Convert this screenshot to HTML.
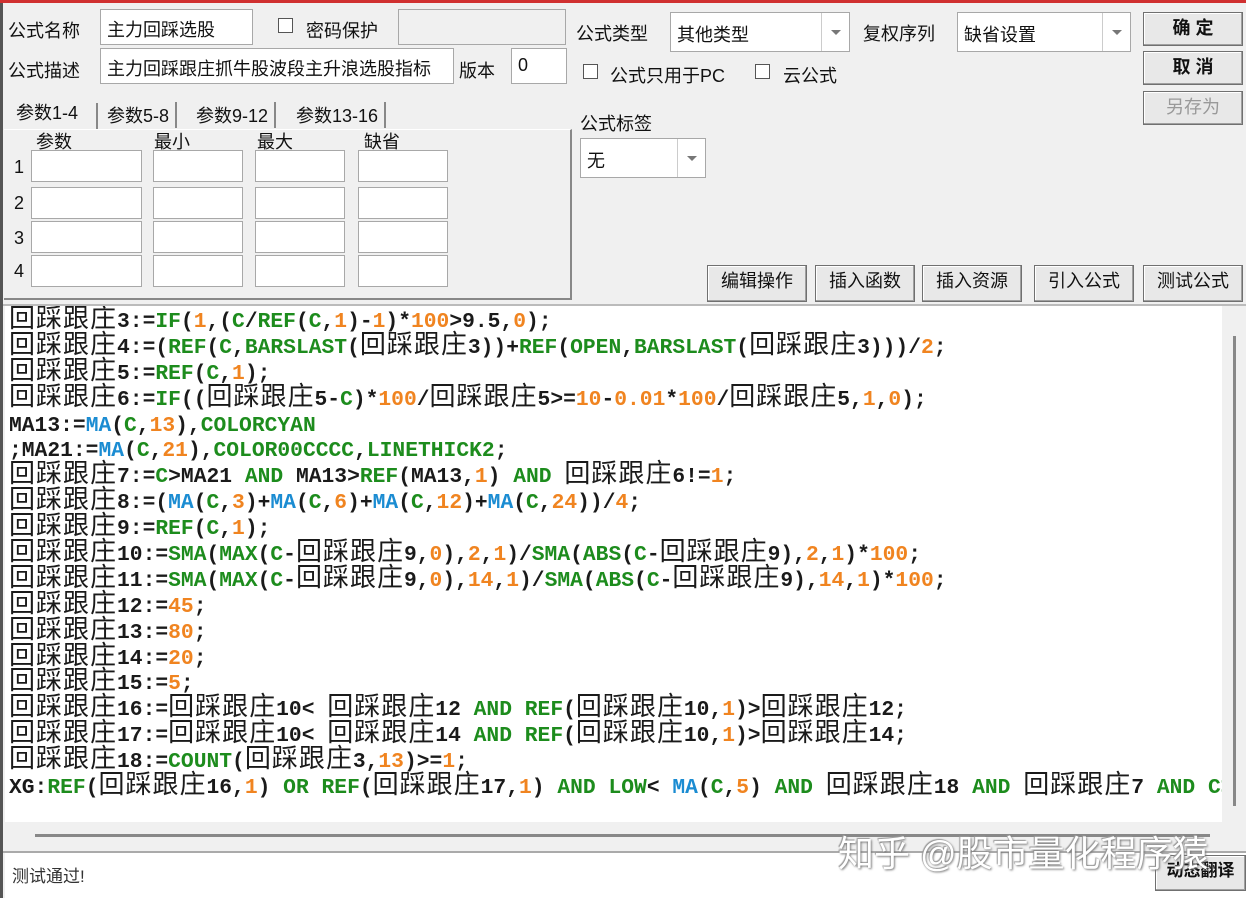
<!DOCTYPE html>
<html><head><meta charset="utf-8">
<style>
*{margin:0;padding:0;box-sizing:border-box}
body{width:1246px;height:898px;background:#f0f0f0;position:relative;overflow:hidden;font-family:"Liberation Sans","Noto Sans CJK SC",sans-serif;font-size:18px;color:#111}
.a{position:absolute}
.box{position:absolute;background:#fff;border:1px solid #a8a8a8}
.btn{position:absolute;background:#e8e8e8;border:1px solid #707070;box-shadow:inset -1px -1px 0 #a0a0a0,inset 1px 1px 0 #fff;text-align:center;font-size:18px;line-height:30px}
.cb{position:absolute;width:15px;height:15px;border:1px solid #555;background:#fff}
.dd{position:absolute;right:0;top:0;bottom:0;width:28px;border-left:1px solid #ccc}
.dd:after{content:"";position:absolute;left:9px;top:50%;margin-top:-2px;border-left:5px solid transparent;border-right:5px solid transparent;border-top:5px solid #777}
#ed{position:absolute;left:5px;top:306px;width:1217px;height:516px;background:#fff;overflow:hidden}
#code{position:absolute;left:4px;top:4px;white-space:nowrap;font-family:"Liberation Mono",monospace;font-weight:bold;font-size:21.3px;line-height:25.9px;color:#1a1a1a}
#code div{height:25.9px}
.k{font-family:"Noto Sans CJK SC",sans-serif;font-weight:normal;font-size:26px;letter-spacing:1px;line-height:0}
.g{color:#1d8c1d}.b{color:#1b8cd2}.o{color:#f08420}
</style></head><body>
<div class="a" style="left:0;top:0;width:1246px;height:3px;background:#d03030"></div>
<div class="a" style="left:0;top:3px;width:3px;height:895px;background:#555"></div>

<div class="a" style="left:8px;top:17px">公式名称</div>
<div class="box" style="left:100px;top:9px;width:153px;height:36px;padding:6px 6px">主力回踩选股</div>
<div class="cb" style="left:278px;top:18px"></div>
<div class="a" style="left:306px;top:17px">密码保护</div>
<div class="box" style="left:398px;top:9px;width:168px;height:36px;background:#f0f0f0"></div>
<div class="a" style="left:8px;top:57px">公式描述</div>
<div class="box" style="left:100px;top:48px;width:354px;height:36px;padding:6px 6px;overflow:hidden;white-space:nowrap">主力回踩跟庄抓牛股波段主升浪选股指标</div>
<div class="a" style="left:459px;top:57px">版本</div>
<div class="box" style="left:511px;top:48px;width:56px;height:36px;padding:6px 6px">0</div>

<div class="a" style="left:8px;top:103px;width:90px;height:26px;background:#f0f0f0;border-right:2px solid #888"></div>
<div class="a" style="left:16px;top:99px">参数1-4</div>
<div class="a" style="left:107px;top:102px;border-right:2px solid #888;padding-right:6px">参数5-8</div>
<div class="a" style="left:196px;top:102px;border-right:2px solid #888;padding-right:6px">参数9-12</div>
<div class="a" style="left:296px;top:102px;border-right:2px solid #888;padding-right:6px">参数13-16</div>
<div class="a" style="left:4px;top:129px;width:568px;height:171px;border-right:2px solid #888;border-bottom:2px solid #888;border-top:1px solid #fff"></div>
<div class="a" style="left:36px;top:128px">参数</div>
<div class="a" style="left:154px;top:128px">最小</div>
<div class="a" style="left:257px;top:128px">最大</div>
<div class="a" style="left:364px;top:128px">缺省</div>
<div class="a" style="left:14px;top:157px">1</div><div class="a" style="left:14px;top:193px">2</div><div class="a" style="left:14px;top:228px">3</div><div class="a" style="left:14px;top:261px">4</div>
<div class="box" style="left:31px;top:150px;width:111px;height:32px"></div><div class="box" style="left:153px;top:150px;width:90px;height:32px"></div><div class="box" style="left:255px;top:150px;width:90px;height:32px"></div><div class="box" style="left:358px;top:150px;width:90px;height:32px"></div>
<div class="box" style="left:31px;top:187px;width:111px;height:32px"></div><div class="box" style="left:153px;top:187px;width:90px;height:32px"></div><div class="box" style="left:255px;top:187px;width:90px;height:32px"></div><div class="box" style="left:358px;top:187px;width:90px;height:32px"></div>
<div class="box" style="left:31px;top:221px;width:111px;height:32px"></div><div class="box" style="left:153px;top:221px;width:90px;height:32px"></div><div class="box" style="left:255px;top:221px;width:90px;height:32px"></div><div class="box" style="left:358px;top:221px;width:90px;height:32px"></div>
<div class="box" style="left:31px;top:255px;width:111px;height:32px"></div><div class="box" style="left:153px;top:255px;width:90px;height:32px"></div><div class="box" style="left:255px;top:255px;width:90px;height:32px"></div><div class="box" style="left:358px;top:255px;width:90px;height:32px"></div>

<div class="a" style="left:576px;top:20px">公式类型</div>
<div class="box" style="left:670px;top:12px;width:180px;height:40px;padding:8px 6px">其他类型<div class="dd"></div></div>
<div class="a" style="left:863px;top:20px">复权序列</div>
<div class="box" style="left:957px;top:12px;width:174px;height:40px;padding:8px 6px">缺省设置<div class="dd"></div></div>
<div class="cb" style="left:583px;top:64px"></div><div class="a" style="left:610px;top:62px">公式只用于PC</div>
<div class="cb" style="left:755px;top:64px"></div><div class="a" style="left:783px;top:62px">云公式</div>
<div class="a" style="left:580px;top:110px">公式标签</div>
<div class="box" style="left:580px;top:138px;width:126px;height:40px;padding:8px 6px">无<div class="dd"></div></div>

<div class="btn" style="left:1143px;top:12px;width:100px;height:34px;font-weight:bold">确 定</div>
<div class="btn" style="left:1143px;top:51px;width:100px;height:34px;font-weight:bold">取 消</div>
<div class="btn" style="left:1143px;top:91px;width:100px;height:34px;color:#999">另存为</div>
<div class="btn" style="left:707px;top:265px;width:100px;height:37px">编辑操作</div>
<div class="btn" style="left:815px;top:265px;width:100px;height:37px">插入函数</div>
<div class="btn" style="left:922px;top:265px;width:100px;height:37px">插入资源</div>
<div class="btn" style="left:1034px;top:265px;width:100px;height:37px">引入公式</div>
<div class="btn" style="left:1143px;top:265px;width:100px;height:37px">测试公式</div>
<div class="a" style="left:3px;top:304px;width:1243px;height:2px;background:#bbb"></div>

<div id="ed"><div id="code">
<div><span class="k">回踩跟庄</span>3:=<span class="g">IF</span>(<span class="o">1</span>,(<span class="g">C</span>/<span class="g">REF</span>(<span class="g">C</span>,<span class="o">1</span>)-<span class="o">1</span>)*<span class="o">100</span>&gt;9.5,<span class="o">0</span>);</div>
<div><span class="k">回踩跟庄</span>4:=(<span class="g">REF</span>(<span class="g">C</span>,<span class="g">BARSLAST</span>(<span class="k">回踩跟庄</span>3))+<span class="g">REF</span>(<span class="g">OPEN</span>,<span class="g">BARSLAST</span>(<span class="k">回踩跟庄</span>3)))/<span class="o">2</span>;</div>
<div><span class="k">回踩跟庄</span>5:=<span class="g">REF</span>(<span class="g">C</span>,<span class="o">1</span>);</div>
<div><span class="k">回踩跟庄</span>6:=<span class="g">IF</span>((<span class="k">回踩跟庄</span>5-<span class="g">C</span>)*<span class="o">100</span>/<span class="k">回踩跟庄</span>5&gt;=<span class="o">10</span>-<span class="o">0.01</span>*<span class="o">100</span>/<span class="k">回踩跟庄</span>5,<span class="o">1</span>,<span class="o">0</span>);</div>
<div>MA13:=<span class="b">MA</span>(<span class="g">C</span>,<span class="o">13</span>),<span class="g">COLORCYAN</span></div>
<div>;MA21:=<span class="b">MA</span>(<span class="g">C</span>,<span class="o">21</span>),<span class="g">COLOR00CCCC</span>,<span class="g">LINETHICK2</span>;</div>
<div><span class="k">回踩跟庄</span>7:=<span class="g">C</span>&gt;MA21 <span class="g">AND</span> MA13&gt;<span class="g">REF</span>(MA13,<span class="o">1</span>) <span class="g">AND</span> <span class="k">回踩跟庄</span>6!=<span class="o">1</span>;</div>
<div><span class="k">回踩跟庄</span>8:=(<span class="b">MA</span>(<span class="g">C</span>,<span class="o">3</span>)+<span class="b">MA</span>(<span class="g">C</span>,<span class="o">6</span>)+<span class="b">MA</span>(<span class="g">C</span>,<span class="o">12</span>)+<span class="b">MA</span>(<span class="g">C</span>,<span class="o">24</span>))/<span class="o">4</span>;</div>
<div><span class="k">回踩跟庄</span>9:=<span class="g">REF</span>(<span class="g">C</span>,<span class="o">1</span>);</div>
<div><span class="k">回踩跟庄</span>10:=<span class="g">SMA</span>(<span class="g">MAX</span>(<span class="g">C</span>-<span class="k">回踩跟庄</span>9,<span class="o">0</span>),<span class="o">2</span>,<span class="o">1</span>)/<span class="g">SMA</span>(<span class="g">ABS</span>(<span class="g">C</span>-<span class="k">回踩跟庄</span>9),<span class="o">2</span>,<span class="o">1</span>)*<span class="o">100</span>;</div>
<div><span class="k">回踩跟庄</span>11:=<span class="g">SMA</span>(<span class="g">MAX</span>(<span class="g">C</span>-<span class="k">回踩跟庄</span>9,<span class="o">0</span>),<span class="o">14</span>,<span class="o">1</span>)/<span class="g">SMA</span>(<span class="g">ABS</span>(<span class="g">C</span>-<span class="k">回踩跟庄</span>9),<span class="o">14</span>,<span class="o">1</span>)*<span class="o">100</span>;</div>
<div><span class="k">回踩跟庄</span>12:=<span class="o">45</span>;</div>
<div><span class="k">回踩跟庄</span>13:=<span class="o">80</span>;</div>
<div><span class="k">回踩跟庄</span>14:=<span class="o">20</span>;</div>
<div><span class="k">回踩跟庄</span>15:=<span class="o">5</span>;</div>
<div><span class="k">回踩跟庄</span>16:=<span class="k">回踩跟庄</span>10&lt; <span class="k">回踩跟庄</span>12 <span class="g">AND</span> <span class="g">REF</span>(<span class="k">回踩跟庄</span>10,<span class="o">1</span>)&gt;<span class="k">回踩跟庄</span>12;</div>
<div><span class="k">回踩跟庄</span>17:=<span class="k">回踩跟庄</span>10&lt; <span class="k">回踩跟庄</span>14 <span class="g">AND</span> <span class="g">REF</span>(<span class="k">回踩跟庄</span>10,<span class="o">1</span>)&gt;<span class="k">回踩跟庄</span>14;</div>
<div><span class="k">回踩跟庄</span>18:=<span class="g">COUNT</span>(<span class="k">回踩跟庄</span>3,<span class="o">13</span>)&gt;=<span class="o">1</span>;</div>
<div>XG:<span class="g">REF</span>(<span class="k">回踩跟庄</span>16,<span class="o">1</span>) <span class="g">OR</span> <span class="g">REF</span>(<span class="k">回踩跟庄</span>17,<span class="o">1</span>) <span class="g">AND</span> <span class="g">LOW</span>&lt; <span class="b">MA</span>(<span class="g">C</span>,<span class="o">5</span>) <span class="g">AND</span> <span class="k">回踩跟庄</span>18 <span class="g">AND</span> <span class="k">回踩跟庄</span>7 <span class="g">AND</span> <span class="g">C&gt;REF</span></div>
</div></div>
<div class="a" style="left:1222px;top:306px;width:24px;height:545px;background:#f0f0f0"></div>
<div class="a" style="left:1233px;top:336px;width:3px;height:470px;background:#888"></div>
<div class="a" style="left:5px;top:822px;width:1217px;height:29px;background:#f0f0f0"></div>
<div class="a" style="left:35px;top:834px;width:1175px;height:3px;background:#888"></div>
<div class="a" style="left:3px;top:851px;width:1243px;height:2px;background:#aaa"></div>
<div class="a" style="left:5px;top:853px;width:1241px;height:45px;background:#fff"></div>
<div class="a" style="left:12px;top:862px;font-size:17px;color:#333">测试通过!</div>
<div class="btn" style="left:1155px;top:855px;width:91px;height:36px;font-size:17px;font-weight:bold">动态翻译</div>
<div class="a" style="left:838px;top:825px;font-size:36px;color:#fff;text-shadow:1px 1px 2px #777,-1px -1px 1px #999;white-space:nowrap">知乎 @股市量化程序猿</div>
</body></html>
